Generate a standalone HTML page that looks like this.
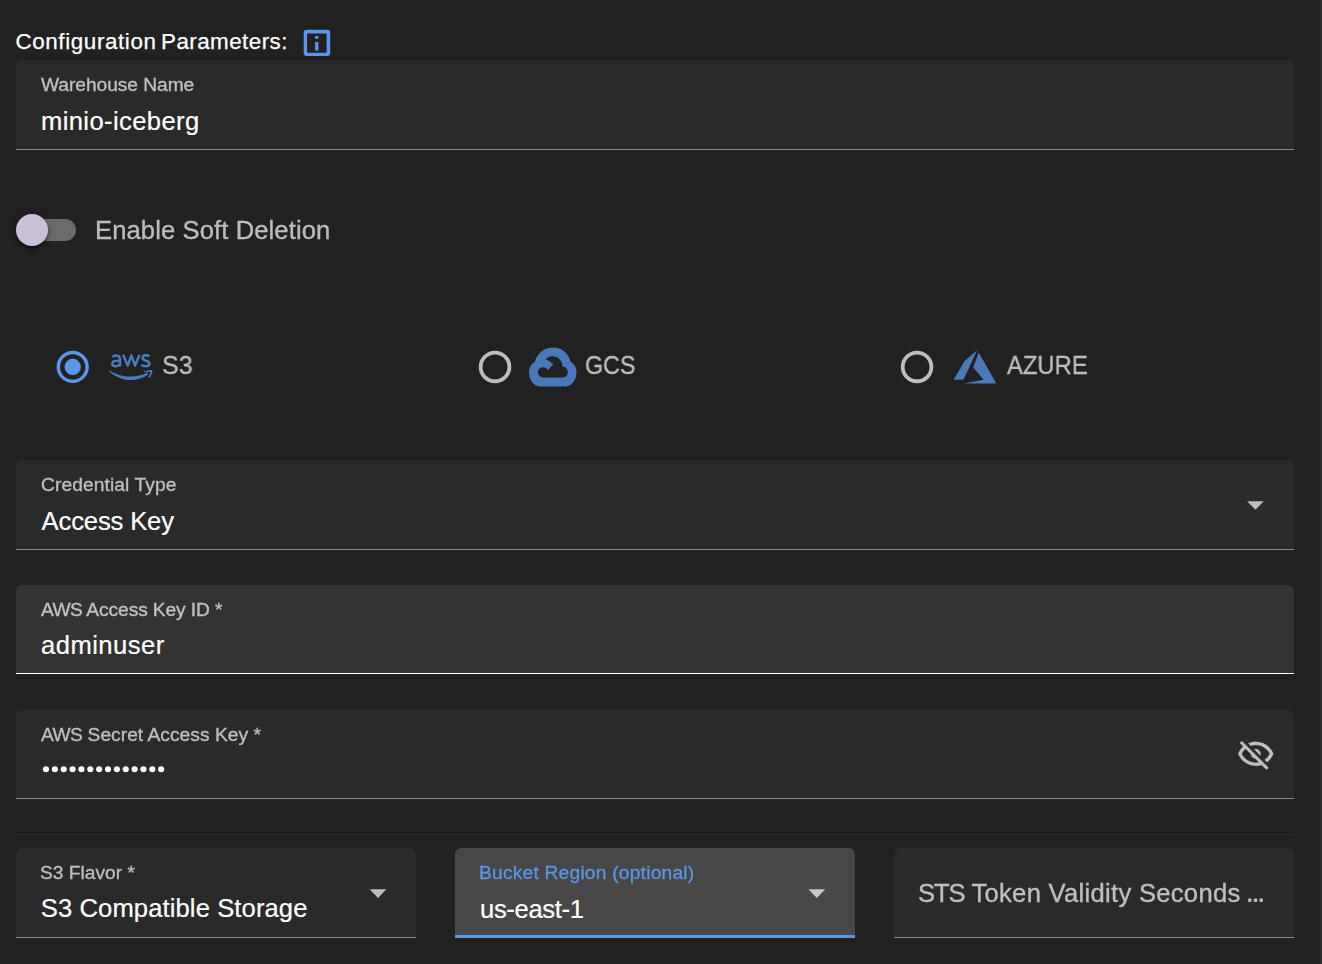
<!DOCTYPE html>
<html lang="en">
<head>
<meta charset="utf-8">
<title>Warehouse configuration</title>
<style>
html,body{margin:0;padding:0;}
body{width:1322px;height:964px;overflow:hidden;background:#212121;position:relative;
  font-family:"Liberation Sans",sans-serif;color:#fff;}
.abs{position:absolute;}
.t{position:absolute;white-space:nowrap;line-height:1;transform-origin:0 0;}
.lbl,.big{will-change:transform;}
.lbl{font-size:19.2px;color:#fff;opacity:.7;-webkit-text-stroke:0.3px #fff;}
.val{font-size:25.6px;color:#fff;-webkit-text-stroke:0.2px #fff;}
.big{font-size:25.6px;color:#fff;opacity:.7;-webkit-text-stroke:0.3px #fff;}
.field{position:absolute;background:#2a2a2a;border-radius:6.4px 6.4px 0 0;}
.field .line{position:absolute;left:0;right:0;bottom:0;height:1px;background:#8a8a8a;}
.strip{position:absolute;left:1320px;top:0;width:2px;height:964px;background:#2d2d2d;box-shadow:-1px 0 0 #1f1f1f;}
svg{position:absolute;overflow:visible;}
</style>
</head>
<body>

<!-- right edge strip -->
<div class="strip"></div>

<!-- title -->
<span class="t" id="t-title" style="left:15.5px;top:30.8px;font-size:22.4px;color:#fff;letter-spacing:0.6px;-webkit-text-stroke:0.25px #fff;">Configuration</span>
<span class="t" id="t-title2" style="left:161px;top:30.8px;font-size:22.4px;color:#fff;letter-spacing:0.45px;-webkit-text-stroke:0.25px #fff;">Parameters:</span>
<svg id="i-info" style="left:0;top:0;width:1322px;height:964px" viewBox="0 0 1322 964"><path fill="#5b96eb" fill-rule="evenodd" d="M306.7 29.8H327.2A3 3 0 0 1 330.2 32.8V53.1A3 3 0 0 1 327.2 56.1H306.7A3 3 0 0 1 303.7 53.1V32.8A3 3 0 0 1 306.7 29.8ZM307.1 33.5V52.7H326.6V33.5ZM315.1 36H318.4V38.8H315.1ZM315.1 41.9H318.4V50.6H315.1Z"/></svg>

<!-- Warehouse name -->
<div class="field" style="left:16px;top:60px;width:1278px;height:90px;"><div class="line"></div></div>
<span class="t lbl" id="t-wh-l" style="left:41.4px;top:74.5px;letter-spacing:-0.05px;">Warehouse Name</span>
<span class="t val" id="t-wh-v" style="left:41px;top:109.3px;letter-spacing:0.375px;">minio-iceberg</span>

<!-- switch -->
<div class="abs" style="left:19px;top:219px;width:57.2px;height:22px;border-radius:11.2px;background:#6b6b6b;"></div>
<div class="abs" style="left:16px;top:214px;width:32px;height:32px;border-radius:50%;background:#cac0d8;box-shadow:0 3px 3px rgba(0,0,0,.35),0 1px 6px rgba(0,0,0,.25);"></div>
<span class="t big" id="t-soft" style="left:94.8px;top:218.3px;letter-spacing:0.1px;">Enable Soft Deletion</span>

<!-- radios -->
<svg id="r1" style="left:0;top:0;width:1322px;height:964px" viewBox="0 0 1322 964"><circle cx="72.7" cy="366.9" r="14.4" fill="none" stroke="#5b96eb" stroke-width="3.4"/><circle cx="72.7" cy="366.9" r="8.15" fill="#5b96eb"/></svg>
<svg id="r2" style="left:0;top:0;width:1322px;height:964px" viewBox="0 0 1322 964"><circle cx="495" cy="366.9" r="14.35" fill="none" stroke="#bdbdbd" stroke-width="3.8"/></svg>
<svg id="r3" style="left:0;top:0;width:1322px;height:964px" viewBox="0 0 1322 964"><circle cx="917.05" cy="366.9" r="14.35" fill="none" stroke="#bdbdbd" stroke-width="3.8"/></svg>

<!-- aws logo -->
<svg id="i-aws" style="left:100px;top:345px;width:60px;height:44px" viewBox="0 0 1315 964">
  <g fill="none" stroke="#4a7cc4" stroke-width="52" stroke-linecap="butt" stroke-linejoin="round">
    <!-- a -->
    <path d="M272 262C320 225 440 200 440 320V470"/>
    <path d="M440 345C340 340 268 350 268 410C268 490 400 480 440 410"/>
    <!-- w -->
    <path d="M506 212L606 452L688 228L768 452L866 212" stroke-linejoin="round"/>
    <!-- s -->
    <path d="M1085 250C1040 215 935 210 930 280C925 350 1085 330 1085 405C1085 480 960 475 905 435"/>
  </g>
  <path fill="#4a7cc4" d="M195 575C330 700 520 770 660 768C800 766 960 720 1060 640L1040 605C930 665 790 692 660 690C520 688 350 650 215 562Z"/>
  <path fill="#4a7cc4" d="M965 580C1020 555 1100 540 1148 550C1155 600 1120 680 1085 722L1055 708C1085 670 1105 620 1100 590C1060 585 1015 595 975 605Z"/>
</svg>
<span class="t big" id="t-s3" style="left:162.3px;top:352.4px;transform:scaleX(0.9457);font-size:26.5px;">S3</span>

<!-- gcs -->
<svg id="i-gcs" style="left:522px;top:340px;width:60px;height:52px" viewBox="0 0 1112 964">
  <path fill="#4a78b8" fill-rule="evenodd" d="M330 860C215 860 130 740 130 600C130 510 175 440 240 400C280 250 410 140 575 140C740 140 860 250 900 400C965 440 1010 510 1010 600C1010 740 925 860 810 860Z
  M390 695C335 695 295 650 295 600C295 545 335 505 390 505C425 505 455 525 475 560L580 455C545 410 495 375 435 360C470 320 520 300 570 300C670 300 750 385 750 490C810 495 850 545 850 600C850 655 810 695 755 695Z"/>
</svg>
<span class="t big" id="t-gcs" style="left:584.5px;top:352.4px;transform:scaleX(0.879);font-size:26.5px;">GCS</span>

<!-- azure -->
<svg id="i-az" style="left:0;top:0;width:1322px;height:964px" viewBox="0 0 1322 964"><g transform="translate(949.4 341.25) scale(2.13333)"><path fill="#4a78b8" d="M13.05,4.24L6.56,18.05L2,18L7.09,9.24L13.05,4.24M13.75,5.33L22,19.76H6.74L16.04,18.1L11.17,12.31L13.75,5.33Z"/></g></svg>
<span class="t big" id="t-az" style="left:1007px;top:352.4px;transform:scaleX(0.8975);font-size:26.5px;">AZURE</span>

<!-- credential type -->
<div class="field" style="left:16px;top:460px;width:1278px;height:90px;"><div class="line"></div></div>
<span class="t lbl" id="t-ct-l" style="left:40.8px;top:474.6px;letter-spacing:0.1px;">Credential Type</span>
<span class="t val" id="t-ct-v" style="left:41.6px;top:509.2px;letter-spacing:-0.15px;">Access Key</span>
<svg id="a1" style="left:0;top:0;width:1322px;height:964px" viewBox="0 0 1322 964"><path fill="#bfbfbf" d="M1247.1 501.2H1263.8L1255.45 509.75Z"/></svg>

<!-- access key id (hovered) -->
<div class="field" style="left:16px;top:585px;width:1278px;height:89px;background:#333333;"><div class="line" style="background:#ffffff;height:1px"></div></div>
<span class="t lbl" id="t-ak-l" style="left:41px;top:599.6px;letter-spacing:-0.1px;"><span style="letter-spacing:-0.6px">AWS</span> Access Key ID *</span>
<span class="t val" id="t-ak-v" style="left:41.1px;top:633px;letter-spacing:0.45px;">adminuser</span>

<!-- secret -->
<div class="field" style="left:16px;top:710px;width:1278px;height:89px;"><div class="line"></div></div>
<span class="t lbl" id="t-sk-l" style="left:41px;top:724.6px;letter-spacing:0.03px;"><span style="letter-spacing:-0.6px">AWS</span> Secret Access Key *</span>
<svg id="dots" style="left:0;top:0;width:1322px;height:964px" viewBox="0 0 1322 964"><g fill="#fff">
<circle cx="46" cy="769.2" r="3.05"/><circle cx="54.86" cy="769.2" r="3.05"/><circle cx="63.72" cy="769.2" r="3.05"/><circle cx="72.58" cy="769.2" r="3.05"/><circle cx="81.44" cy="769.2" r="3.05"/><circle cx="90.3" cy="769.2" r="3.05"/><circle cx="99.16" cy="769.2" r="3.05"/><circle cx="108.02" cy="769.2" r="3.05"/><circle cx="116.88" cy="769.2" r="3.05"/><circle cx="125.74" cy="769.2" r="3.05"/><circle cx="134.6" cy="769.2" r="3.05"/><circle cx="143.46" cy="769.2" r="3.05"/><circle cx="152.32" cy="769.2" r="3.05"/><circle cx="161.18" cy="769.2" r="3.05"/>
</g></svg>
<svg id="i-eye" style="left:0;top:0;width:1322px;height:964px" viewBox="0 0 1322 964"><g transform="translate(1236.58 734.64) scale(1.6)"><path fill="#bfbfbf" stroke="#bfbfbf" stroke-width="0.15" d="M2,5.27L3.28,4L20,20.72L18.73,22L15.65,18.92C14.5,19.3 13.28,19.5 12,19.5C7,19.5 2.73,16.39 1,12C1.69,10.24 2.79,8.69 4.19,7.46L2,5.27M12,9A3,3 0 0,1 15,12C15,12.35 14.94,12.69 14.83,13L11,9.17C11.31,9.06 11.65,9 12,9M12,4.5C17,4.5 21.27,7.61 23,12C22.18,14.08 20.79,15.88 19,17.19L17.58,15.76C18.94,14.82 20.06,13.54 20.82,12C19.17,8.64 15.76,6.5 12,6.5C10.91,6.5 9.84,6.68 8.84,7L7.3,5.47C8.74,4.85 10.33,4.5 12,4.5M3.18,12C4.83,15.36 8.24,17.5 12,17.5C12.69,17.5 13.37,17.43 14,17.29L11.72,15C10.29,14.85 9.15,13.71 9,12.28L5.6,8.87C4.61,9.72 3.78,10.78 3.18,12Z"/></g></svg>

<!-- divider -->
<div class="abs" style="left:16px;top:834px;width:1278px;height:1px;background:#2c2c2c;"></div>

<!-- bottom row -->
<div class="field" style="left:16px;top:848px;width:400px;height:90px;"><div class="line"></div></div>
<span class="t lbl" id="t-fl-l" style="left:40px;top:862.5px;">S3 Flavor *</span>
<span class="t val" id="t-fl-v" style="left:40.8px;top:896.4px;letter-spacing:0.1px;">S3 Compatible Storage</span>
<svg id="a2" style="left:0;top:0;width:1322px;height:964px" viewBox="0 0 1322 964"><path fill="#bfbfbf" d="M369.7 889.2H386.4L378.05 897.9Z"/></svg>

<div class="field" style="left:455px;top:848px;width:400px;height:90px;background:#474747;"><div class="line" style="background:#5b96eb;height:3.2px"></div></div>
<span class="t lbl" id="t-br-l" style="opacity:1;-webkit-text-stroke:0.3px #5b96eb;left:479px;top:862.5px;color:#5b96eb;letter-spacing:0.22px;">Bucket Region (optional)</span>
<span class="t val" id="t-br-v" style="left:480px;top:896.6px;letter-spacing:-0.35px;">us-east-1</span>
<svg id="a3" style="left:0;top:0;width:1322px;height:964px" viewBox="0 0 1322 964"><path fill="#c8c8c8" d="M808.4 889.2H825.2L816.8 897.9Z"/></svg>

<div class="field" style="left:894px;top:848px;width:400px;height:90px;"><div class="line"></div></div>
<span class="t big" id="t-sts" style="left:918px;top:881.4px;letter-spacing:0.29px;"><span style="letter-spacing:-1.1px">STS</span> Token Validity Seconds</span>
<svg id="ell" style="left:0;top:0;width:1322px;height:964px" viewBox="0 0 1322 964"><g fill="#bfbfbf"><rect x="1248.1" y="898.5" width="3.4" height="3.5" rx=".9"/><rect x="1253.8" y="898.5" width="3.4" height="3.5" rx=".9"/><rect x="1259.5" y="898.5" width="3.4" height="3.5" rx=".9"/></g></svg>

</body>
</html>
